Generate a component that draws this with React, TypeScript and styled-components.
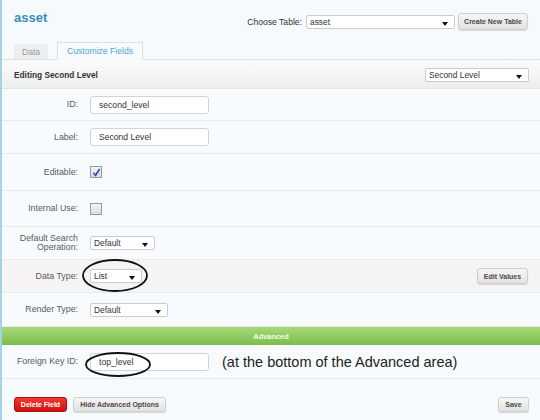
import React from "react";
import styled, { createGlobalStyle, css } from "styled-components";

const Global = createGlobalStyle`
  html, body { margin: 0; padding: 0; }
  body {
    background: #f5fafc;
    font-family: "Liberation Sans", Arial, sans-serif;
    color: #333;
    width: 540px;
    height: 420px;
    overflow: hidden;
  }
`;

const Page = styled.div`
  width: 540px;
  height: 420px;
  box-sizing: border-box;
  border-left: 2px solid #a6d2e2;
  background: #f5fafc;
  display: flex;
  flex-direction: column;
`;

const TopBar = styled.div`
  height: 40px;
  display: flex;
  justify-content: space-between;
  align-items: flex-start;
  padding: 0 12px 0 12px;
`;

const Title = styled.div`
  margin-top: 10px;
  font-size: 13px;
  line-height: 16px;
  font-weight: bold;
  color: #3a8fb7;
`;

const ChooseGroup = styled.div`
  margin-top: 13px;
  display: flex;
  align-items: center;
`;

const SmallText = styled.span`
  font-size: 8.6px;
  color: #333;
  margin-right: 4px;
`;

const SelectBox = styled.div<{ $w: number }>`
  position: relative;
  width: ${(p) => p.$w}px;
  height: 14px;
  box-sizing: border-box;
  background: #fff;
  border: 1px solid #c9cdd0;
  border-radius: 2px;
  font-size: 8.4px;
  line-height: 12px;
  padding-left: 3px;
  color: #333;
  &::after {
    content: "";
    position: absolute;
    right: 6px;
    top: 6px;
    border-left: 3.5px solid transparent;
    border-right: 3.5px solid transparent;
    border-top: 4px solid #111;
  }
`;

const Btn = styled.button<{ $w: number; $h: number; $danger?: boolean }>`
  width: ${(p) => p.$w}px;
  height: ${(p) => p.$h}px;
  padding: 0;
  font-family: "Liberation Sans", Arial, sans-serif;
  font-size: 7px;
  font-weight: bold;
  border-radius: 3px;
  cursor: pointer;
  ${(p) =>
    p.$danger
      ? css`
          color: #fff;
          background: linear-gradient(#ee3b34, #d0120e);
          border: 1px solid #b80c0a;
        `
      : css`
          color: #4a4a4a;
          background: linear-gradient(#f6f6f6, #e2e2e2);
          border: 1px solid #cfcfcf;
          box-shadow: 0 1px 1px rgba(0, 0, 0, 0.12);
        `}
`;

const TopBtn = styled(Btn)`
  margin-left: 3px;
`;

const Tabs = styled.div`
  height: 19px;
  display: flex;
  align-items: flex-end;
  gap: 9px;
  padding-left: 12px;
  position: relative;
  z-index: 1;
`;

const Tab = styled.div<{ $active?: boolean }>`
  font-size: 8.6px;
  display: flex;
  align-items: center;
  justify-content: center;
  box-sizing: border-box;
  ${(p) =>
    p.$active
      ? css`
          width: 86px;
          height: 18px;
          color: #4ea6cb;
          background: #f8fbfc;
          border: 1px solid #dde1e3;
          border-bottom: none;
          margin-bottom: -1px;
          padding-bottom: 1px;
        `
      : css`
          width: 34px;
          height: 15px;
          color: #9a9a9a;
          background: #eceff0;
        `}
`;

const HeaderBar = styled.div`
  height: 30px;
  box-sizing: border-box;
  border-top: 1px solid #dde1e3;
  border-bottom: 1px solid #e1e4e6;
  background: linear-gradient(#fbfbfb, #eeeeee);
  display: flex;
  align-items: center;
  justify-content: space-between;
  padding: 1px 11px 0 12px;
`;

const HeaderTitle = styled.div`
  font-size: 8.3px;
  font-weight: bold;
  color: #333;
`;

const Row = styled.div<{ $h: number; $shade?: boolean }>`
  height: ${(p) => p.$h}px;
  box-sizing: border-box;
  display: flex;
  align-items: center;
  padding-right: 12px;
  border-bottom: 1px solid #e6eaec;
  background: ${(p) => (p.$shade ? "#f5f3f3" : "#f7fbfd")};
`;

const Label = styled.div`
  width: 76px;
  flex: none;
  margin-right: 12px;
  text-align: right;
  font-size: 8.8px;
  line-height: 9px;
  color: #5a5a5a;
`;

const Input = styled.div<{ $w: number }>`
  width: ${(p) => p.$w}px;
  height: 18px;
  box-sizing: border-box;
  background: #fff;
  border: 1px solid #d0d4d7;
  border-radius: 3px;
  font-size: 8.6px;
  line-height: 16px;
  padding-left: 8px;
  color: #333;
`;

const CheckBox = styled.div`
  width: 12px;
  height: 12px;
  box-sizing: border-box;
  border: 1px solid #8f9caa;
  background: linear-gradient(#f3f3f3, #dadde0);
  display: flex;
  align-items: center;
  justify-content: center;
`;

const Circled = styled.div`
  position: relative;
`;

const Ring = styled.svg`
  position: absolute;
  pointer-events: none;
  overflow: visible;
`;

const RightBtn = styled(Btn)`
  margin-left: auto;
`;

const AdvancedBar = styled.div`
  height: 18px;
  background: linear-gradient(#a6da78, #7cbc4b);
  display: flex;
  align-items: center;
  justify-content: center;
  font-size: 7.4px;
  font-weight: bold;
  color: #f4fbea;
`;

const Note = styled.div`
  margin-left: 13px;
  font-size: 14.5px;
  color: #222;
`;

const Footer = styled.div`
  flex: 1;
  display: flex;
  align-items: flex-start;
  gap: 6px;
  padding: 18px 11px 0 12px;
`;

export default function App() {
  return (
    <>
      <Global />
      <Page>
        <TopBar>
          <Title>asset</Title>
          <ChooseGroup>
            <SmallText>Choose Table:</SmallText>
            <SelectBox $w={149}>asset</SelectBox>
            <TopBtn $w={70} $h={17}>Create New Table</TopBtn>
          </ChooseGroup>
        </TopBar>
        <Tabs>
          <Tab>Data</Tab>
          <Tab $active>Customize Fields</Tab>
        </Tabs>
        <HeaderBar>
          <HeaderTitle>Editing Second Level</HeaderTitle>
          <SelectBox $w={104}>Second Level</SelectBox>
        </HeaderBar>
        <Row $h={32}>
          <Label>ID:</Label>
          <Input $w={119}>second_level</Input>
        </Row>
        <Row $h={33}>
          <Label>Label:</Label>
          <Input $w={119}>Second Level</Input>
        </Row>
        <Row $h={37}>
          <Label>Editable:</Label>
          <CheckBox>
            <svg width="9" height="9" viewBox="0 0 9 9">
              <path d="M1.5 4.8 L3.6 7.4 L7.6 1" fill="none" stroke="#2b47a8" strokeWidth="1.6" />
            </svg>
          </CheckBox>
        </Row>
        <Row $h={36}>
          <Label>Internal Use:</Label>
          <CheckBox />
        </Row>
        <Row $h={33}>
          <Label>
            Default Search
            <br />
            Operation:
          </Label>
          <SelectBox $w={65}>Default</SelectBox>
        </Row>
        <Row $h={33} $shade>
          <Label>Data Type:</Label>
          <Circled>
            <SelectBox $w={52}>List</SelectBox>
            <Ring width="66" height="33" style={{ left: -8, top: -10 }}>
              <ellipse cx="33" cy="16.5" rx="32" ry="15.5" fill="none" stroke="#111" strokeWidth="1.8" />
            </Ring>
          </Circled>
          <RightBtn $w={51} $h={16}>Edit Values</RightBtn>
        </Row>
        <Row $h={34}>
          <Label>Render Type:</Label>
          <SelectBox $w={78}>Default</SelectBox>
        </Row>
        <AdvancedBar>Advanced</AdvancedBar>
        <Row $h={34}>
          <Label>Foreign Key ID:</Label>
          <Circled>
            <Input $w={119}>top_level</Input>
            <Ring width="66" height="25" style={{ left: -5, top: -1 }}>
              <ellipse cx="33" cy="12.5" rx="32" ry="11.5" fill="none" stroke="#111" strokeWidth="1.8" />
            </Ring>
          </Circled>
          <Note>(at the bottom of the Advanced area)</Note>
        </Row>
        <Footer>
          <Btn $w={53} $h={15} $danger>Delete Field</Btn>
          <Btn $w={93} $h={15}>Hide Advanced Options</Btn>
          <RightBtn $w={31} $h={15}>Save</RightBtn>
        </Footer>
      </Page>
    </>
  );
}
